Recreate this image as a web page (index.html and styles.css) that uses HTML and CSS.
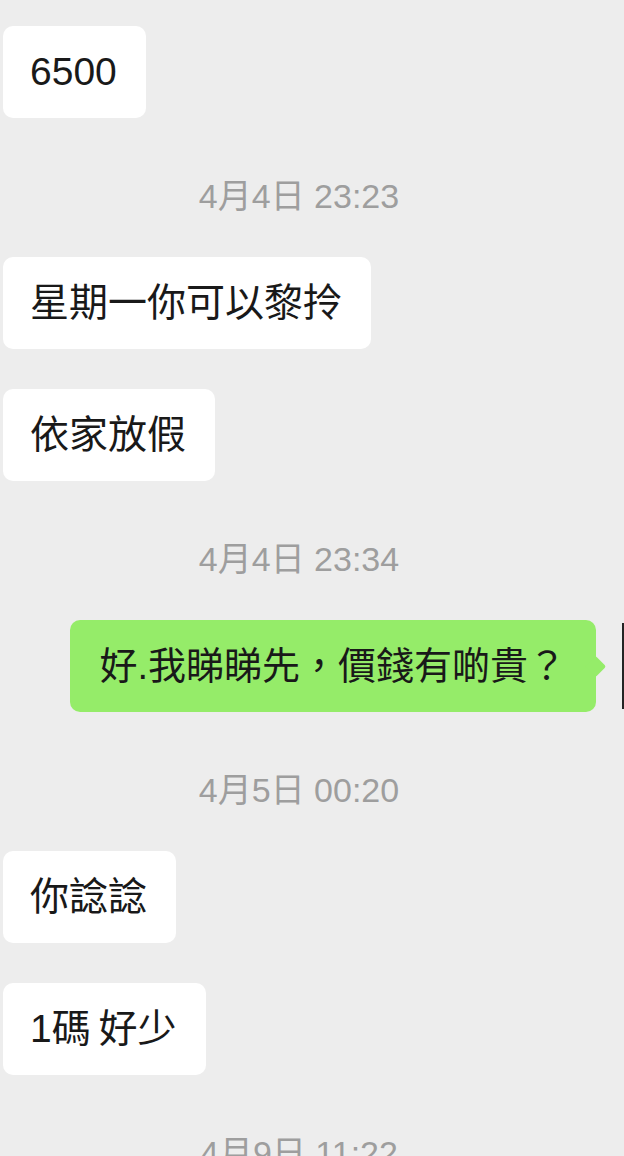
FILE: index.html
```html
<!DOCTYPE html>
<html lang="zh-Hant">
<head>
    <meta charset="UTF-8">
    <meta name="viewport" content="width=device-width, initial-scale=1.0">
    <title>聊天</title>
    <link rel="stylesheet" href="styles.css">
</head>
<body>

<!-- Conversation -->
<div class="chat">
    <div class="msg left"><div class="bubble">6500</div></div>

    <div class="time">4月4日 23:23</div>

    <div class="msg left"><div class="bubble">星期一你可以黎拎</div></div>
    <div class="msg left"><div class="bubble">依家放假</div></div>

    <div class="time">4月4日 23:34</div>

    <div class="msg right">
        <div class="bubble green">好.我睇睇先，價錢有啲貴？</div>
        <div class="avatar"></div>
    </div>

    <div class="time">4月5日 00:20</div>

    <div class="msg left"><div class="bubble">你諗諗</div></div>
    <div class="msg left"><div class="bubble">1碼 好少</div></div>

    <div class="time">4月9日 11:22</div>
</div>

</body>
</html>
```

FILE: styles.css
```css
body {
    margin: 0;
    padding: 0;
    background: #ededed;
    font-family: 'Liberation Sans', 'Noto Sans CJK TC', sans-serif;
    color: #191919;
    overflow: hidden;
}

.chat {
    padding-top: 26px;
}

.msg {
    display: flex;
    align-items: center;
}
.msg + .msg {
    margin-top: 40px;
}
.msg.left {
    justify-content: flex-start;
    padding-left: 3px;
}
.msg.right {
    justify-content: flex-end;
}

.bubble {
    position: relative;
    background: #ffffff;
    border-radius: 10px;
    font-size: 39px;
    line-height: 52px;
    padding: 20px 29px 20px 27px;
    white-space: nowrap;
    word-spacing: -3px;
}
.bubble.green {
    background: #95ec69;
    font-size: 38px;
    padding: 20px 30px 20px 29px;
    margin-right: 26px;
}
/* Tail of the sent message */
.bubble.green::after {
    content: '';
    position: absolute;
    right: -7px;
    top: 50%;
    width: 15px;
    height: 15px;
    margin-top: -7px;
    background: #95ec69;
    border-radius: 2px;
    transform: rotate(45deg);
}

.avatar {
    width: 2px;
    height: 86px;
    background: #242424;
    flex-shrink: 0;
}

.time {
    text-align: center;
    padding-right: 26px;
    font-size: 34px;
    line-height: 40px;
    color: #9e9e9e;
    margin: 58px 0 41px;
}
```
